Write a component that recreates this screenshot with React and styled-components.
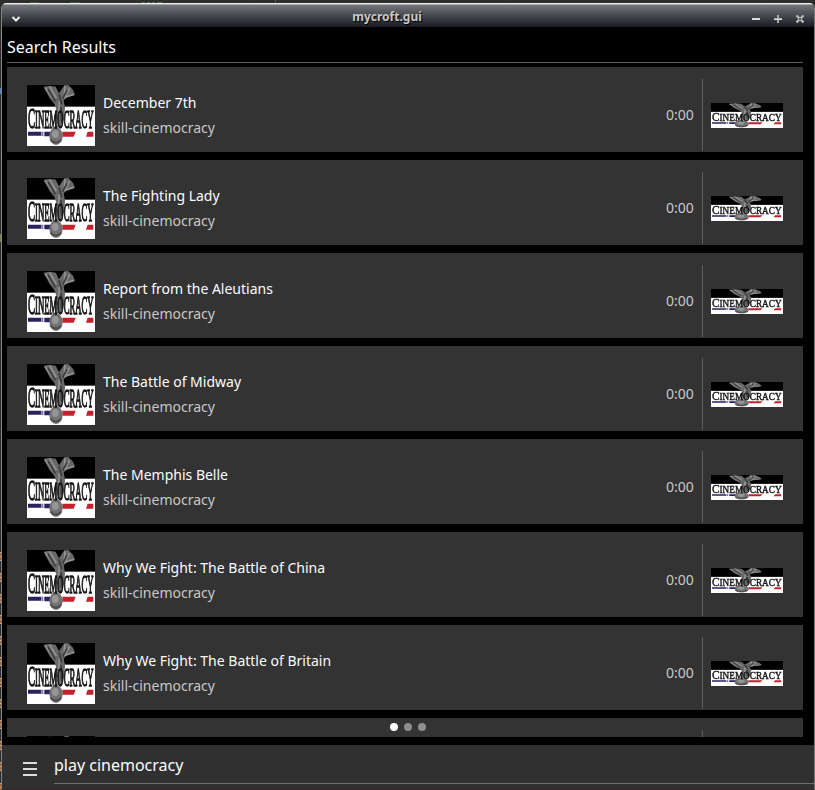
import React from "react";
import styled, { createGlobalStyle } from "styled-components";

const Global = createGlobalStyle`
  *, *::before, *::after { box-sizing: border-box; }
  body { margin: 0; background: #2b2b2b; overflow: hidden; font-family: "Noto Sans", sans-serif; }
`;

const Desktop = styled.div`
  height: 790px;
  display: grid;
  grid-template-columns: 1px 1fr;
  grid-template-rows: 3px 1fr;
  background: #2b2b2b;
`;
const TopStrip = styled.div`
  grid-column: 1 / -1;
  background:
    linear-gradient(#3c5a38, #3c5a38) 30px 2px / 9px 1px no-repeat,
    linear-gradient(#3c5a38, #3c5a38) 70px 2px / 10px 1px no-repeat,
    linear-gradient(90deg, #4c7a45 3px, transparent 3px 5px, #4c7a45 5px 8px, transparent 8px 10px, #4c7a45 10px 13px, transparent 13px 15px, #4c7a45 15px 20px) 142px 2px / 20px 1px no-repeat,
    linear-gradient(#555, #555) 275px 0 / 1px 3px no-repeat,
    #2e2e2e;
`;
const SideStrip = styled.div`
  background:
    linear-gradient(#4f82b8, #4f82b8) 0 85px / 1px 6px no-repeat,
    linear-gradient(#6d8a4a, #6d8a4a) 0 231px / 1px 8px no-repeat,
    linear-gradient(#2b2b2b, #2b2b2b) 0 0 / 1px 548px no-repeat,
    repeating-linear-gradient(#c9b9a8 0 1px, #a5622f 1px 4px, #c9b9a8 4px 5px, #a5622f 5px 8px, #c9b9a8 8px 9px, #2b2b2b 9px 21px) 0 549px / 1px 238px no-repeat;
`;
const Window = styled.main`
  height: 787px;
  display: flex;
  flex-direction: column;
  background: #000;
  border-left: 1px solid #858585;
  border-right: 1px solid #777;
  border-bottom: 1px solid #38292d;
  border-radius: 5px 5px 0 0;
  overflow: hidden;
`;
const TitleBar = styled.header`
  height: 24px;
  flex: none;
  display: grid;
  grid-template-columns: 26px 1fr 66px;
  border-top: 1px solid #eee;
  box-shadow: inset 0 1px #aaa;
  background: linear-gradient(#777a7d, #55585c 35%, #33363a 70%, #181b20);
`;
const Title = styled.h1`
  margin: 0;
  padding-right: 2px;
  text-align: center;
  font: 700 12px/26px "Noto Sans", sans-serif;
  color: #c8c8c8;
  text-shadow: 1px 1px 1px #000;
`;
const Controls = styled.div`
  display: flex;
  align-items: center;
  padding: 3px 0 0 ${(p) => (p.$left ? "8px" : "0")};
  svg { width: 22px; height: 16px; display: block; overflow: visible; }
  ${(p) => p.$left && "svg { width: 12px; }"}
`;
const Body = styled.section`
  height: 718px;
  flex: none;
  padding: 8px 11px 8px 5px;
  position: relative;
`;
const Heading = styled.h2`
  margin: 0 0 4px;
  height: 28px;
  border-bottom: 1px solid #606060;
  font-size: 16px;
  line-height: 24px;
  font-weight: 400;
  color: #fcfcfc;
`;
const List = styled.div`
  height: 670px;
  overflow: hidden;
  display: flex;
  flex-direction: column;
  gap: 8px;
`;
const Row = styled.article`
  height: 85px;
  flex: none;
  display: flex;
  padding: 12px 20px 0;
  background: #333;
`;
const Thumb = styled.div`
  width: ${(p) => (p.$small ? 72 : 68)}px;
  height: ${(p) => (p.$small ? 25 : 61)}px;
  margin-top: ${(p) => (p.$small ? 24 : 6)}px;
  svg { display: block; width: 100%; height: 100%; }
`;
const Texts = styled.div`
  flex: 1;
  padding: 11px 0 0 8px;
  font-size: 14px;
  line-height: 25px;
  color: #fcfcfc;
`;
const Skill = styled.div`
  color: #c8c8c8;
`;
const Time = styled.div`
  width: 37px;
  height: 72px;
  margin-right: 8px;
  border-right: 1px solid #5d5d5d;
  font-size: 14px;
  line-height: 72px;
  color: #c8c8c8;
`;
const Dots = styled.div`
  position: absolute;
  left: 388px;
  bottom: 14px;
  display: flex;
  gap: 6px;
`;
const Dot = styled.span`
  width: 8px;
  height: 8px;
  border-radius: 50%;
  background: ${(p) => (p.$active ? "#fcfcfc" : "#8e8e8e")};
`;
const Footer = styled.footer`
  flex: 1;
  display: flex;
  padding-left: 21px;
  background: #303030;
`;
const Menu = styled.div`
  width: 31px;
  padding-top: 17px;
  svg { display: block; }
`;
const Query = styled.div`
  flex: 1;
  height: 39px;
  border-bottom: 1px solid #6e6e6e;
  font-size: 16px;
  line-height: 40px;
  color: #fcfcfc;
`;

/* Stretches to its frame, so the wide and the tall versions share one drawing. */
function Logo({ small }) {
  return (
    <svg viewBox="0 0 204 183" preserveAspectRatio="none">
      <defs>
        <filter id="soft" x="-5%" y="-5%" width="110%" height="110%">
          <feGaussianBlur stdDeviation="1.7" />
        </filter>
      </defs>
      <rect width="204" height="183" fill="#fff" />
      <rect width="204" height="65" fill="#000" />
      <g filter="url(#soft)">
        <path d="M3 140h40v12H3zM52 140h20v14H52z" fill="#29225f" />
        <path d="M44 140h5v13h-5z" fill="#77749b" />
        <path d="M106 140h40l-6 15h-34zM182 140h17v15h-22z" fill="#c3202b" />
        <path d="M50 5l18-3 18 3 10 20 16-24 12-1 14 14 6 15-20 5-14 12 4 22-2 30-9 29H84l-2-26 6-27-6-18-14-16z" fill="#686868" />
        <path d="M54 8l28 36M68 5l20 34M114 3l-2 26M128 10l-14 24M141 28l-31 10M97 48l-3 46M90 102v22" fill="none" stroke="#929292" strokeWidth="5" />
        <path d="M63 12l22 37M96 28l8 30M120 16l-13 25M102 66l2 48M87 82l-3 20" fill="none" stroke="#3b3b3b" strokeWidth="5" />
        <ellipse cx="87" cy="153" rx="20" ry="27" fill="#727272" />
        <ellipse cx="85" cy="147" rx="10" ry="12" fill="#969696" />
        <path d="M70 164q16 17 33 0" fill="none" stroke="#4d4d4d" strokeWidth="6" />
      </g>
      <text
        x="3"
        y="130"
        fill="#151515"
        filter="url(#soft)"
        fontFamily="Liberation Serif, serif"
        fontSize="74"
        stroke="#151515"
        strokeWidth={small ? 3 : 4}
        textLength="197"
        lengthAdjust="spacingAndGlyphs"
      >
        <tspan fontSize="90">C</tspan>INEMOCRACY
      </text>
    </svg>
  );
}

const titles = [
  "December 7th",
  "The Fighting Lady",
  "Report from the Aleutians",
  "The Battle of Midway",
  "The Memphis Belle",
  "Why We Fight: The Battle of China",
  "Why We Fight: The Battle of Britain",
  "",
];

export default function App() {
  return (
    <>
      <Global />
      <Desktop>
        <TopStrip />
        <SideStrip />
        <Window>
          <TitleBar>
            <Controls $left>
              <svg viewBox="0 0 12 16"><path d="M2.5 6L6 9.5 9.5 6" fill="none" stroke="#eee" strokeWidth="2" /></svg>
            </Controls>
            <Title>mycroft.gui</Title>
            <Controls>
              <svg viewBox="0 0 22 16"><path d="M4 8h8" stroke="#ddd" strokeWidth="2" /></svg>
              <svg viewBox="0 0 22 16"><path d="M4 8h8M8 4v8" stroke="#aaa" strokeWidth="2" /><path d="M4 8.5h8" stroke="#ddd" /></svg>
              <svg viewBox="0 0 22 16"><path d="M4.5 4.5l7 7M11.5 4.5l-7 7" stroke="#bbb" strokeWidth="2.4" /><path d="M7 7h2v2H7z" fill="#55585c" /></svg>
            </Controls>
          </TitleBar>
          <Body>
            <Heading>Search Results</Heading>
            <List>
              {titles.map((t, i) => (
                <Row key={i}>
                  <Thumb><Logo /></Thumb>
                  <Texts>
                    <div>{t}</div>
                    {t && <Skill>skill-cinemocracy</Skill>}
                  </Texts>
                  <Time>{t && "0:00"}</Time>
                  <Thumb $small><Logo small /></Thumb>
                </Row>
              ))}
            </List>
            <Dots><Dot $active /><Dot /><Dot /></Dots>
          </Body>
          <Footer>
            <Menu>
              <svg width="14" height="14"><path d="M0 1h14M0 7h14M0 13h14" stroke="#dcdcdc" strokeWidth="2" /></svg>
            </Menu>
            <Query>play cinemocracy</Query>
          </Footer>
        </Window>
      </Desktop>
    </>
  );
}
